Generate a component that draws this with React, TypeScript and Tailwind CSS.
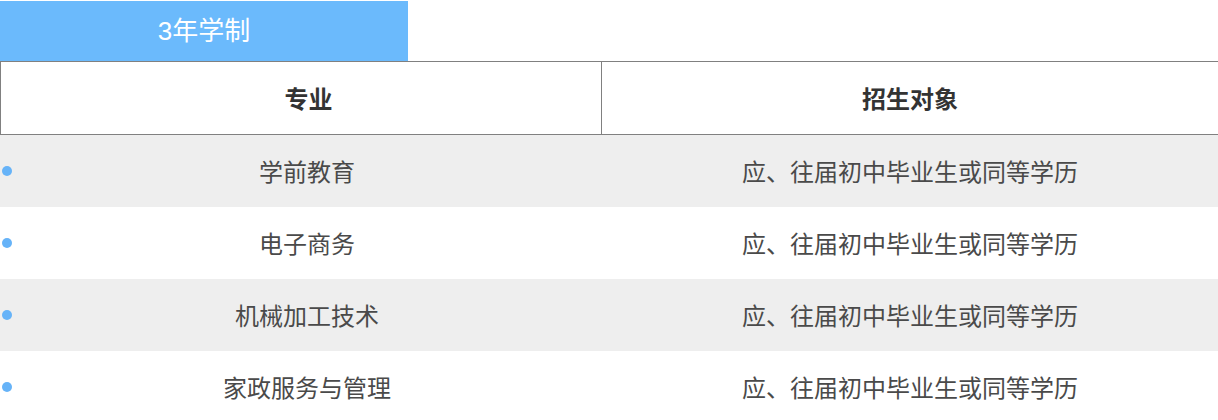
import React from "react";

interface IMajor {
  name: string;
  target: string;
}

const majors: IMajor[] = [
  { name: "学前教育", target: "应、往届初中毕业生或同等学历" },
  { name: "电子商务", target: "应、往届初中毕业生或同等学历" },
  { name: "机械加工技术", target: "应、往届初中毕业生或同等学历" },
  { name: "家政服务与管理", target: "应、往届初中毕业生或同等学历" },
];

function MajorRow({ major, striped }: { major: IMajor; striped: boolean }) {
  return (
    <div
      className={`grid grid-cols-[602px_1fr] h-[72px] ${
        striped ? "bg-[#eeeeee]" : "bg-white"
      }`}
    >
      <div className="flex items-center">
        <span className="ml-[2px] w-[10px] h-[10px] rounded-full bg-[#66b3f8]" />
        <span className="flex-1 text-center">{major.name}</span>
      </div>
      <div className="flex items-center justify-center">{major.target}</div>
    </div>
  );
}

export default function App() {
  return (
    <div
      className="w-[1218px] h-[420px] overflow-hidden bg-white text-[24px] text-[#4a4a4a]"
      style={{ fontFamily: '"Noto Sans CJK SC", "Noto Sans", sans-serif' }}
    >
      <div className="mt-[1px] w-[408px] h-[60px] bg-[#6bbafc] flex items-center justify-center text-white text-[26px]">
        <span style={{ fontFamily: '"Liberation Sans", "Noto Sans CJK SC", sans-serif' }}>
          3年学制
        </span>
      </div>
      <div className="grid grid-cols-[601px_1fr] h-[74px] border border-r-0 border-[#808080] font-bold text-[#333]">
        <div className="flex items-center justify-center pl-[15px] border-r border-[#808080]">
          专业
        </div>
        <div className="flex items-center justify-center">招生对象</div>
      </div>
      {majors.map((major, index) => (
        <MajorRow key={major.name} major={major} striped={index % 2 === 0} />
      ))}
    </div>
  );
}
